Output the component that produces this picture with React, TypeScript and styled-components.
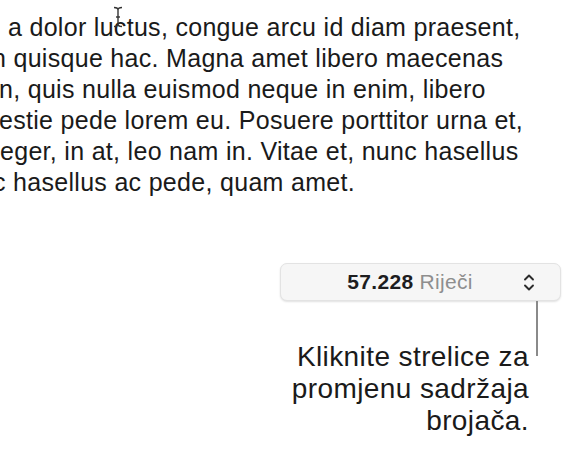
import React from 'react';
import styled, { createGlobalStyle } from 'styled-components';

const GlobalStyle = createGlobalStyle`
    html, body {
        margin: 0;
        padding: 0;
        background: #ffffff;
    }
    body {
        width: 577px;
        height: 451px;
        overflow: hidden;
        font-family: "Liberation Sans", Arial, sans-serif;
        color: #1d1d1f;
    }
`;

const Page = styled.div`
    position: relative;
    width: 577px;
    height: 451px;
    overflow: hidden;
`;

const Paragraph = styled.div`
    padding-top: 12px;
    font-size: 25px;
    line-height: 31px;
    letter-spacing: 0.3px;
    color: #1a1a1a;
`;

const Line = styled.div<{ shift: number }>`
    white-space: nowrap;
    margin-left: ${p => p.shift}px;
`;

const Cursor = styled.svg`
    position: absolute;
    left: 112px;
    top: 6px;
`;

const Counter = styled.div`
    display: flex;
    flex-direction: column;
    align-items: flex-end;
    padding: 65px 16px 0 0;
`;

const Field = styled.div`
    width: 281px;
    height: 38px;
    box-sizing: border-box;
    display: flex;
    align-items: center;
    padding: 0 25px 0 0;
    background: #f6f6f6;
    border: 1px solid #e3e3e3;
    border-radius: 7px;
    box-shadow: 0 1px 2px rgba(0, 0, 0, 0.12);
`;

const Value = styled.div`
    flex: 1;
    text-align: center;
    padding-left: 16px;
    font-size: 21px;
    letter-spacing: 0.3px;
    color: #8e8e8e;
`;

const Number = styled.b`
    color: #1d1d1f;
    font-weight: 700;
`;

const Leader = styled.div`
    width: 2px;
    height: 55px;
    margin-right: 23px;
    background: #8a8a8a;
`;

const Caption = styled.div`
    margin-top: -15px;
    margin-right: 32px;
    text-align: right;
    font-size: 28px;
    line-height: 32px;
    letter-spacing: 0.4px;
    color: #1a1a1a;
`;

const lines: [number, string][] = [
    [8, 'a dolor luctus, congue arcu id diam praesent,'],
    [-8, 'n quisque hac. Magna amet libero maecenas'],
    [-1, 'n, quis nulla euismod neque in enim, libero'],
    [-1, 'estie pede lorem eu. Posuere porttitor urna et,'],
    [0, 'eger, in at, leo nam in. Vitae et, nunc hasellus'],
    [-7, 'c hasellus ac pede, quam amet.'],
];

const Stepper = () => (
    <svg width="12" height="19" viewBox="0 0 12 19" fill="none" stroke="#2b2b2b" strokeWidth="1.9" strokeLinecap="round" strokeLinejoin="round">
        <path d="M2 6.5 L6 2.5 L10 6.5" />
        <path d="M2 12.5 L6 16.5 L10 12.5" />
    </svg>
);

export default function App() {
    return (
        <Page>
            <GlobalStyle />
            <Paragraph>
                {lines.map(([shift, text], i) => (
                    <Line key={i} shift={shift}>{text}</Line>
                ))}
            </Paragraph>
            <Cursor width="12" height="22" viewBox="0 0 12 22" fill="none" stroke="#333" strokeWidth="1.4">
                <path d="M2 1.5 Q6 1.5 6 4 Q6 1.5 10 1.5" />
                <path d="M6 4 V18" />
                <path d="M2 20.5 Q6 20.5 6 18 Q6 20.5 10 20.5" />
                <path d="M4 11 H8" />
            </Cursor>
            <Counter>
                <Field>
                    <Value><Number>57.228</Number> Riječi</Value>
                    <Stepper />
                </Field>
                <Leader />
                <Caption>
                    Kliknite strelice za<br />
                    promjenu sadržaja<br />
                    brojača.
                </Caption>
            </Counter>
        </Page>
    );
}
